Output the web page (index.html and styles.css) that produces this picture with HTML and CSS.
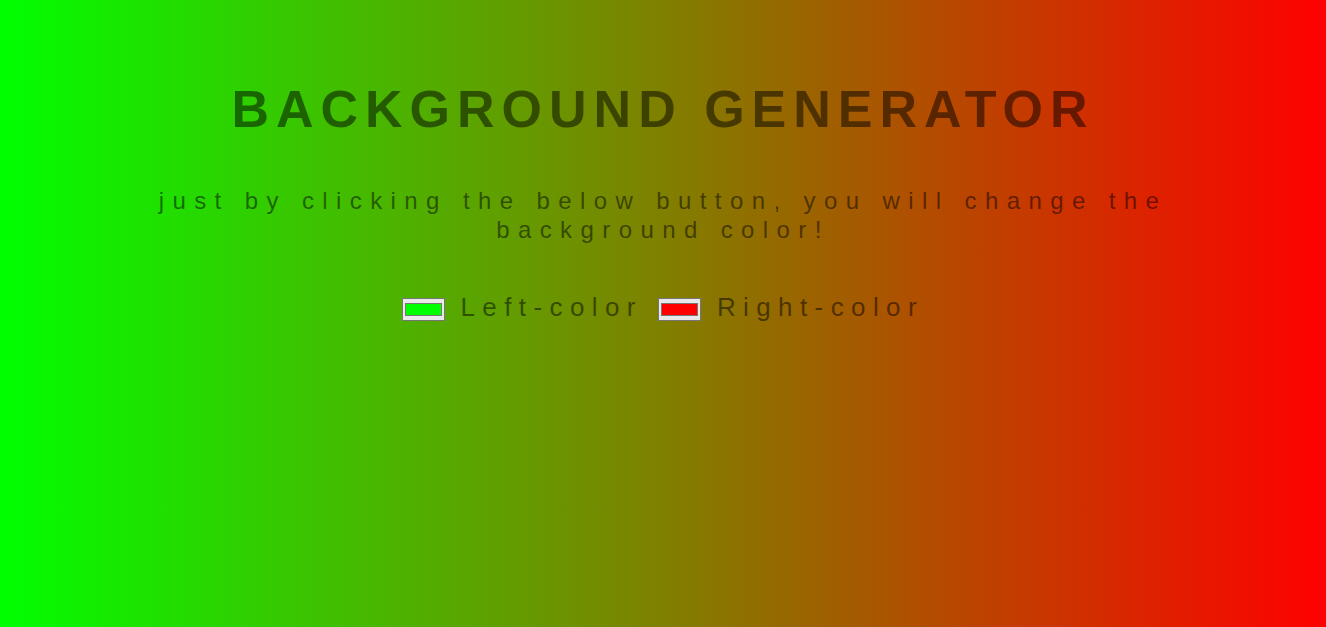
FILE: index.html
```html
<!DOCTYPE html>
<html>
<head>
<meta charset="utf-8">
<title>Background Generator</title>
<link rel="stylesheet" href="styles.css">
</head>
<body>
<main class="page">
  <h1 class="title">BACKGROUND GENERATOR</h1>
  <h3 class="subtitle">just by clicking the below button, you will change the background color!</h3>
  <div class="controls">
    <input class="swatch" type="color" value="#00ff00">
    <span class="label">Left-color</span>
    <input class="swatch" type="color" value="#ff0000">
    <span class="label">Right-color</span>
  </div>
</main>
</body>
</html>
```
FILE: styles.css
```css
html, body {
  margin: 0;
  height: 100%;
}
body {
  background: linear-gradient(to right, #00ff00, #ff0000);
  font-family: "Liberation Sans", Arial, sans-serif;
  color: rgba(0, 0, 0, 0.5);
  text-align: center;
}
.page {
  padding-top: 79px;
  display: flex;
  flex-direction: column;
  align-items: center;
}
.title {
  margin: 0;
  font-size: 52px;
  font-weight: bold;
  letter-spacing: 7px;
  line-height: 60px;
}
.subtitle {
  margin: 47px 0 0;
  max-width: 1100px;
  font-size: 24px;
  font-weight: normal;
  letter-spacing: 0.35em;
  line-height: 29px;
}
.controls {
  margin-top: 48px;
  display: flex;
  align-items: center;
  gap: 15.5px;
}
.label {
  font-size: 26px;
  letter-spacing: 7.4px;
}
.swatch {
  width: 43px;
  height: 23px;
  padding: 0;
  border: 1px solid #767676;
  background-color: #e9e9e9;
  box-sizing: border-box;
  margin: 4px 0 0;
}
.swatch::-webkit-color-swatch-wrapper {
  padding: 4px 2px;
}
.swatch::-webkit-color-swatch {
  border: 1px solid #777777;
}
```
